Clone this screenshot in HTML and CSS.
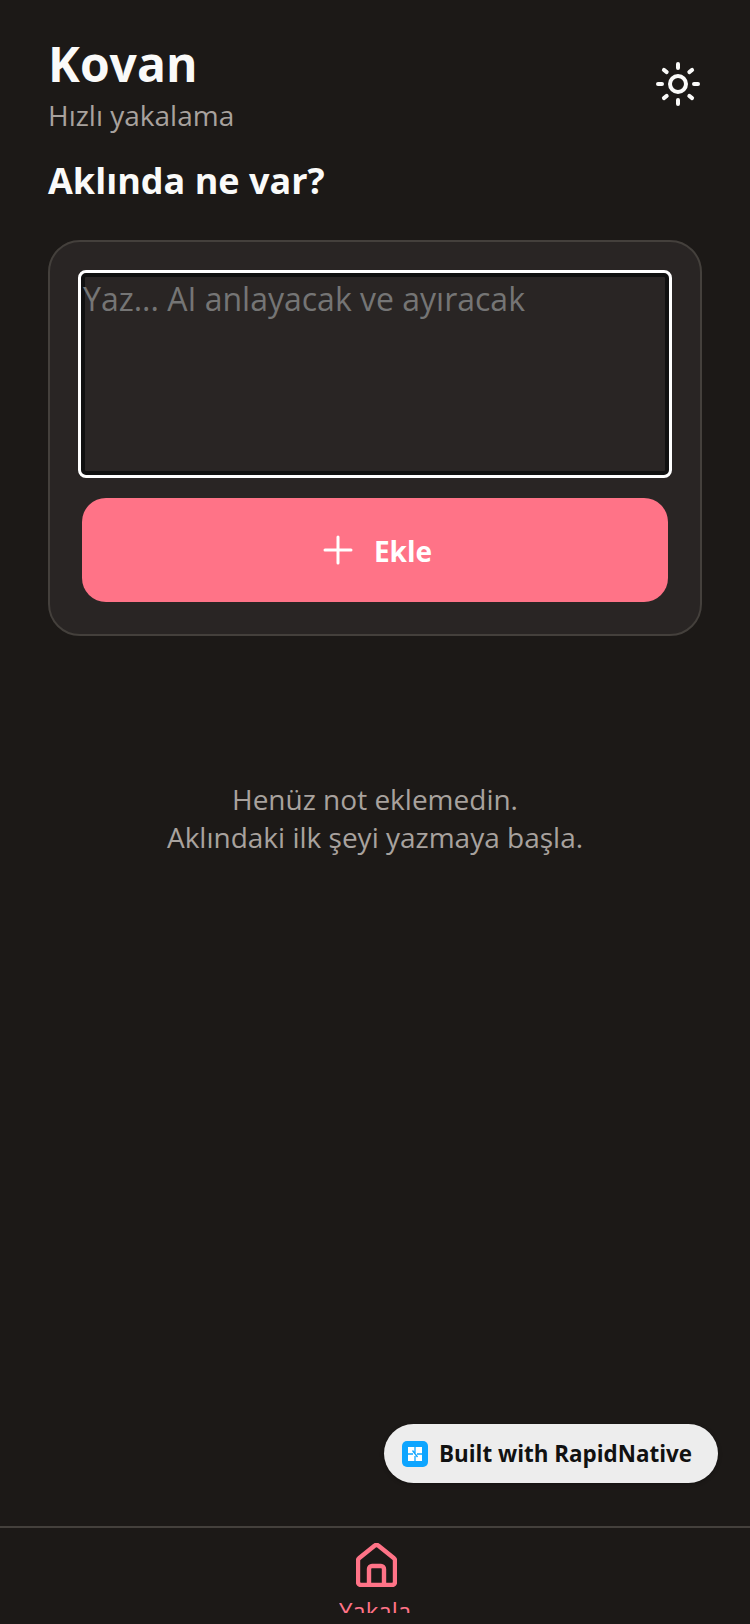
FILE: index.html
```html
<!DOCTYPE html>
<html lang="tr">
<head>
<meta charset="utf-8">
<title>Kovan</title>
<link rel="stylesheet" href="styles.css">
</head>
<body>
<div class="app">
  <main class="main">
    <header class="header">
      <div class="titles">
        <h1 class="title">Kovan</h1>
        <p class="subtitle">Hızlı yakalama</p>
      </div>
      <svg class="sun" viewBox="0 0 48 48" fill="none" stroke="#fafaf9" stroke-width="4" stroke-linecap="round">
        <circle cx="24" cy="24" r="8"/>
        <path d="M24 4v4M24 40v4M4 24h4M40 24h4M9.9 9.900l2.800 2.200M35.300 35.900l2.800 2.200M9.900 38.100l2.800-2.200M35.300 12.100l2.800-2.200"/>
      </svg>
    </header>
    <h2 class="prompt">Aklında ne var?</h2>
    <section class="card">
      <div class="field"><span class="placeholder">Yaz... AI anlayacak ve ayıracak</span></div>
      <div class="add">
        <svg class="plus" viewBox="0 0 40 40" fill="none" stroke="#fff" stroke-width="3" stroke-linecap="round"><path d="M7 19h26M20 6v26"/></svg>
        <span class="add-label">Ekle</span>
      </div>
    </section>
    <div class="empty">
      <p>Henüz not eklemedin.</p>
      <p>Aklındaki ilk şeyi yazmaya başla.</p>
    </div>
  </main>
  <div class="badge">
    <svg class="badge-logo" viewBox="0 0 26 26">
      <rect width="26" height="26" rx="5" fill="#0ea5ff"/>
      <rect x="6" y="6" width="14" height="14" fill="#fff"/>
      <path d="M13 6v6M13 15v5M6 13h5M15 13h5M10.500 9.500l5 6.500" stroke="#0ea5ff" stroke-width="1.300" fill="none"/>
    </svg>
    <span class="badge-text">Built with RapidNative</span>
  </div>
  <nav class="tabbar">
    <div class="tab">
      <svg class="home" viewBox="0 0 41 44" fill="none" stroke="#ff7387" stroke-width="4.400" stroke-linejoin="round" stroke-linecap="round">
        <path d="M2 17.500 a3 3 0 0 1 1-2.200 L18.500 2.800 a3 3 0 0 1 4 0 L38 15.300 a3 3 0 0 1 1 2.200 V39 a3 3 0 0 1-3 3 H5 a3 3 0 0 1-3-3z"/>
        <path d="M13 42V26a3 3 0 0 1 3-3h9a3 3 0 0 1 3 3v16"/>
      </svg>
      <span class="tab-label">Yakala</span>
    </div>
  </nav>
</div>
</body>
</html>
```
FILE: styles.css
```css
* { box-sizing: border-box; margin: 0; padding: 0; }
html, body { width: 750px; height: 1624px; overflow: hidden; }
body { background: #1c1917; font-family: "Open Sans", "Noto Sans", sans-serif; }
.app { position: relative; width: 750px; height: 1624px; display: flex; flex-direction: column; }
.main { flex: 1; padding: 32px 48px 0; }
.header { display: flex; justify-content: space-between; align-items: flex-start; }
.title { font-size: 48px; line-height: 64px; font-weight: 700; color: #fafaf9; }
.subtitle { font-size: 28px; line-height: 40px; color: #a8a29e; margin-top: -1px; }
.sun { width: 48px; height: 48px; margin-top: 28px; }
.prompt { font-size: 36px; line-height: 48px; font-weight: 700; color: #fafaf9; margin-top: 22px; }
.card { margin-top: 35px; background: #292524; border: 2px solid #44403c; border-radius: 32px; padding: 32px; display: flex; flex-direction: column; gap: 24px; }
.field { height: 200px; background: #292524; border-radius: 4px; outline: 3px solid #fff; outline-offset: 1px; box-shadow: 0 0 0 1px #101010, inset 0 0 0 3px #101010; padding: 3px 1px 0; }
.placeholder { font-size: 32px; line-height: 44px; color: #757575; }
.add { height: 104px; background: #ff7387; border-radius: 24px; display: flex; align-items: center; justify-content: center; gap: 16px; }
.plus { width: 40px; height: 40px; margin-top: 2px; }
.add-label { font-size: 28px; font-weight: 700; color: #fff; margin-top: 2px; }
.empty { margin-top: 144px; text-align: center; font-size: 28px; line-height: 38px; color: #a8a29e; }
.badge { position: absolute; left: 384px; top: 1424px; width: 334px; height: 59px; background: #ededed; border-radius: 30px; display: flex; align-items: center; gap: 11px; padding-left: 18px; box-shadow: 0 1px 4px rgba(0,0,0,.3); }
.badge-logo { width: 26px; height: 26px; }
.badge-text { font-size: 22.400px; font-weight: 700; color: #111; }
.tabbar { height: 98px; border-top: 2px solid #44403c; background: #1c1917; display: flex; justify-content: center; }
.tab { height: 85px; overflow: hidden; display: flex; flex-direction: column; align-items: center; padding-top: 15px; }
.home { width: 41px; height: 44px; flex: none; margin-left: 2px; }
.tab-label { font-size: 24px; line-height: 32px; margin-top: 8px; color: #ff7387; }
```
